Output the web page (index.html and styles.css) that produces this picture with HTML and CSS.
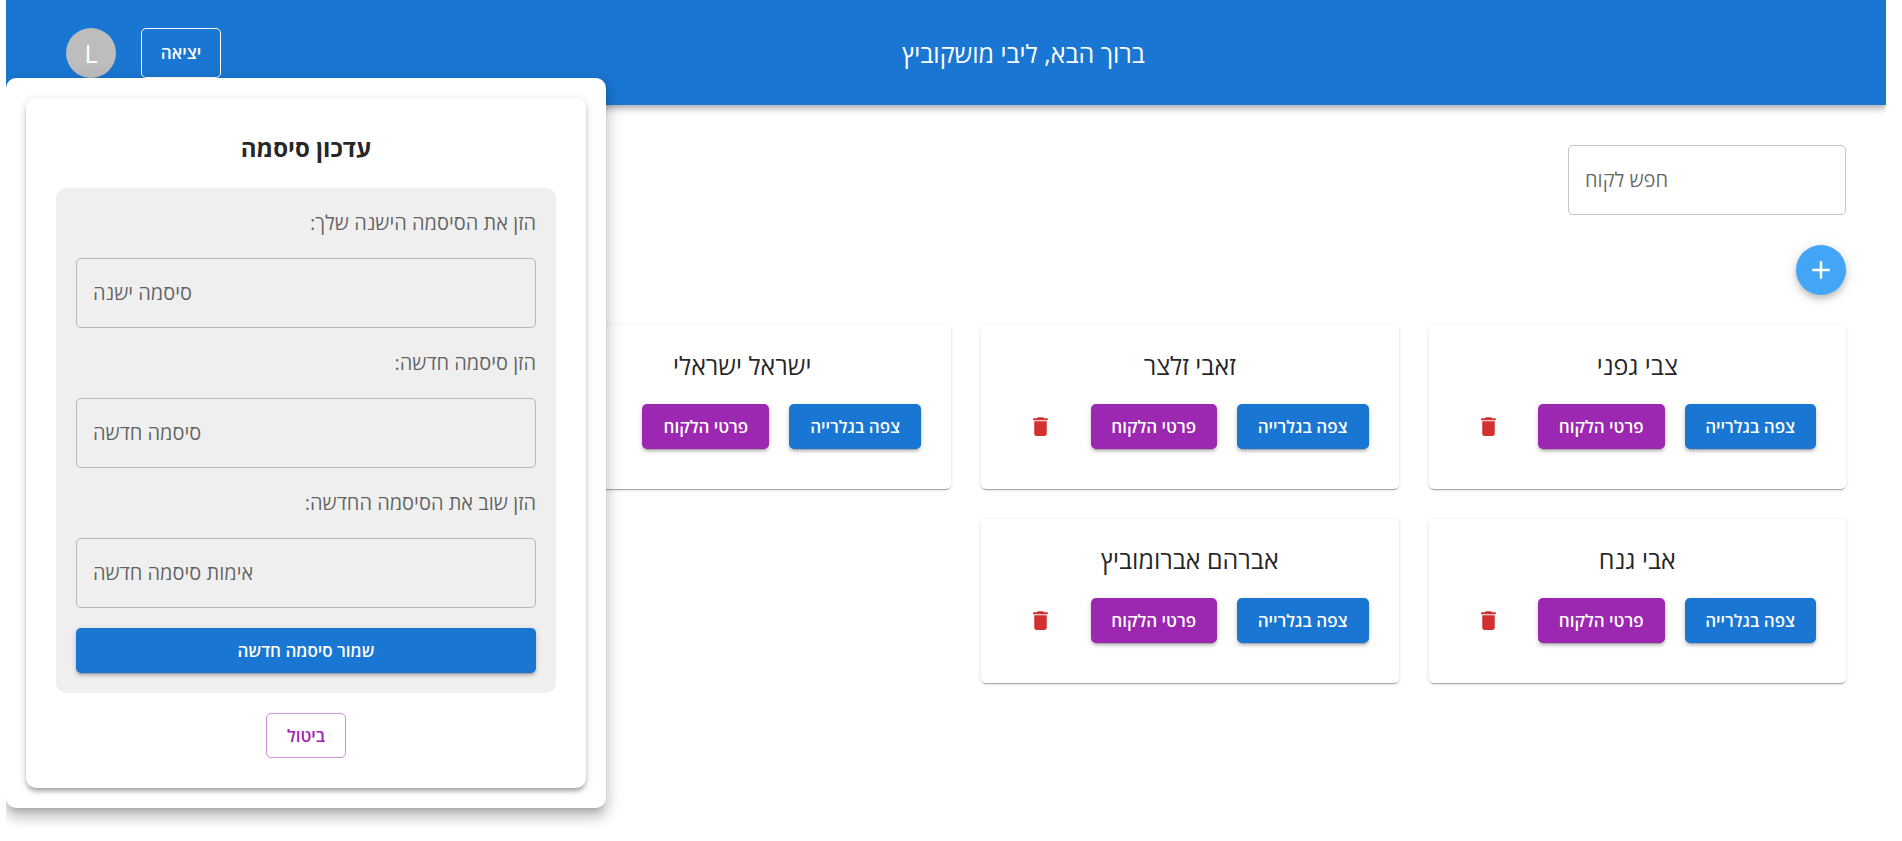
FILE: index.html
```html
<!DOCTYPE html>
<html lang="he" dir="rtl">
<head>
<meta charset="utf-8">
<meta name="viewport" content="width=device-width, initial-scale=1">
<title>ניהול לקוחות</title>
<link rel="stylesheet" href="styles.css">
</head>
<body>
<svg class="sprite" aria-hidden="true">
  <symbol id="icon-delete" viewBox="0 0 24 24"><path d="M6 19c0 1.100.9 2 2 2h8c1.100 0 2-.9 2-2V7H6zM19 4h-3.500l-1-1h-5l-1 1H5v2h14z"/></symbol>
  <symbol id="icon-add" viewBox="0 0 24 24"><path d="M19 13h-6v6h-2v-6H5v-2h6V5h2v6h6z"/></symbol>
</svg>

<header class="app-bar">
  <h1 class="app-bar__title">ברוך הבא, ליבי מושקוביץ</h1>
  <div class="app-bar__actions">
    <button type="button" class="btn btn--light">יציאה</button>
    <button type="button" class="avatar">L</button>
  </div>

  <section class="popover" aria-labelledby="password-title">
    <div class="panel">
      <h2 class="panel__title" id="password-title">עדכון סיסמה</h2>
      <form class="form">
        <label class="form__label" for="old-password">הזן את הסיסמה הישנה שלך:</label>
        <input class="field" id="old-password" type="password" placeholder="סיסמה ישנה">
        <label class="form__label" for="new-password">הזן סיסמה חדשה:</label>
        <input class="field" id="new-password" type="password" placeholder="סיסמה חדשה">
        <label class="form__label" for="confirm-password">הזן שוב את הסיסמה החדשה:</label>
        <input class="field" id="confirm-password" type="password" placeholder="אימות סיסמה חדשה">
        <button type="submit" class="btn btn--primary">שמור סיסמה חדשה</button>
      </form>
      <button type="button" class="btn btn--outlined">ביטול</button>
    </div>
  </section>
</header>

<main class="content">
  <input class="field field--search" type="text" placeholder="חפש לקוח" aria-label="חפש לקוח">
  <button type="button" class="fab" aria-label="הוסף לקוח"><svg class="icon icon--large"><use href="#icon-add"/></svg></button>

  <div class="grid">
    <article class="card">
      <h2 class="card__name">צבי גפני</h2>
      <div class="card__actions">
        <button type="button" class="btn btn--primary">צפה בגלרייה</button>
        <button type="button" class="btn btn--secondary">פרטי הלקוח</button>
        <button type="button" class="icon-btn" aria-label="מחק"><svg class="icon"><use href="#icon-delete"/></svg></button>
      </div>
    </article>
    <article class="card">
      <h2 class="card__name">זאבי זלצר</h2>
      <div class="card__actions">
        <button type="button" class="btn btn--primary">צפה בגלרייה</button>
        <button type="button" class="btn btn--secondary">פרטי הלקוח</button>
        <button type="button" class="icon-btn" aria-label="מחק"><svg class="icon"><use href="#icon-delete"/></svg></button>
      </div>
    </article>
    <article class="card">
      <h2 class="card__name">ישראל ישראלי</h2>
      <div class="card__actions">
        <button type="button" class="btn btn--primary">צפה בגלרייה</button>
        <button type="button" class="btn btn--secondary">פרטי הלקוח</button>
      </div>
    </article>
    <article class="card card--new-row">
      <h2 class="card__name">אבי גנח</h2>
      <div class="card__actions">
        <button type="button" class="btn btn--primary">צפה בגלרייה</button>
        <button type="button" class="btn btn--secondary">פרטי הלקוח</button>
        <button type="button" class="icon-btn" aria-label="מחק"><svg class="icon"><use href="#icon-delete"/></svg></button>
      </div>
    </article>
    <article class="card">
      <h2 class="card__name">אברהם אברומוביץ</h2>
      <div class="card__actions">
        <button type="button" class="btn btn--primary">צפה בגלרייה</button>
        <button type="button" class="btn btn--secondary">פרטי הלקוח</button>
        <button type="button" class="icon-btn" aria-label="מחק"><svg class="icon"><use href="#icon-delete"/></svg></button>
      </div>
    </article>
  </div>
</main>
</body>
</html>
```

FILE: styles.css
```css
* {
  box-sizing: border-box;
}

body {
  min-height: 100vh;
  margin: 0 16px 0 6px;
  background: #fff;
  color: rgba(0, 0, 0, 0.87);
  font-family: "Open Sans", "Noto Sans", sans-serif;
  font-size: 20px;
  line-height: 30px;
}

h1,
h2 {
  margin: 0;
  font-size: 25px;
  line-height: 40px;
  font-weight: 400;
  text-align: center;
}

button,
input {
  font-family: inherit;
}

button {
  cursor: pointer;
}

.sprite {
  display: none;
}

.icon {
  display: block;
  width: 25px;
  height: 25px;
  fill: currentColor;
}

.icon--large {
  width: 30px;
  height: 30px;
}

/* Header */
.app-bar {
  position: relative;
  z-index: 1;
  display: flex;
  align-items: center;
  min-height: 105px;
  padding: 0 60px;
  background: #1976d2;
  color: #fff;
  box-shadow: 0 2px 5px -1px rgba(0, 0, 0, 0.2), 0 5px 6px rgba(0, 0, 0, 0.14), 0 1px 12px rgba(0, 0, 0, 0.12);
}

.app-bar__title {
  flex: 1;
}

.app-bar__actions {
  display: flex;
  gap: 25px;
}

.avatar {
  width: 50px;
  height: 50px;
  padding: 0;
  border: 0;
  border-radius: 50%;
  background: #bdbdbd;
  color: #fff;
  font-size: 25px;
  line-height: 50px;
}

/* Buttons */
.btn {
  min-width: 80px;
  min-height: 45px;
  padding: 0 21px;
  border: 0;
  border-radius: 5px;
  color: #fff;
  font-size: 17px;
  font-weight: 600;
  line-height: 30px;
  white-space: nowrap;
}

.btn--primary,
.btn--secondary {
  box-shadow: 0 4px 1px -3px rgba(0, 0, 0, 0.2), 0 3px 3px rgba(0, 0, 0, 0.14), 0 1px 6px rgba(0, 0, 0, 0.12);
}

.btn--primary {
  background: #1976d2;
}

.btn--secondary {
  background: #9c27b0;
}

.btn--light,
.btn--outlined {
  padding: 0 18px;
  border: 1px solid #fff;
  background: transparent;
}

.btn--outlined {
  align-self: center;
  border-color: rgba(156, 39, 176, 0.5);
  color: #9c27b0;
}

.icon-btn {
  display: grid;
  place-items: center;
  width: 60px;
  height: 45px;
  padding: 0;
  border: 0;
  background: transparent;
  color: #d32f2f;
}

.fab {
  display: grid;
  place-items: center;
  width: 50px;
  height: 50px;
  padding: 0;
  border: 0;
  border-radius: 50%;
  background: #42a5f5;
  color: #fff;
  box-shadow: 0 4px 6px -1px rgba(0, 0, 0, 0.16), 0 4px 10px rgba(0, 0, 0, 0.1), 0 1px 16px rgba(0, 0, 0, 0.08);
}

/* Text fields */
.field {
  width: 100%;
  height: 70px;
  padding: 0 16px 2px;
  border: 1px solid rgba(0, 0, 0, 0.23);
  border-radius: 5px;
  background: transparent;
  color: inherit;
  font-size: 20px;
  text-align: left;
}

.field::placeholder {
  color: rgba(0, 0, 0, 0.6);
  opacity: 1;
}

.field--search {
  width: 278px;
}

/* Password popover */
.popover {
  position: absolute;
  top: 78px;
  left: 0;
  width: 600px;
  max-width: 100%;
  padding: 20px;
  border-radius: 10px;
  background: #fff;
  color: rgba(0, 0, 0, 0.87);
  box-shadow: 0 6px 6px -4px rgba(0, 0, 0, 0.2), 0 10px 12px 1px rgba(0, 0, 0, 0.14), 0 4px 18px 2px rgba(0, 0, 0, 0.12);
}

.panel {
  display: flex;
  flex-direction: column;
  gap: 20px;
  padding: 30px;
  border-radius: 10px;
  box-shadow: 0 4px 4px -2px rgba(0, 0, 0, 0.2), 0 4px 5px rgba(0, 0, 0, 0.14), 0 1px 10px rgba(0, 0, 0, 0.12);
}

.panel__title {
  font-size: 24px;
  font-weight: 700;
}

.form {
  display: flex;
  flex-direction: column;
  gap: 20px;
  padding: 20px;
  border-radius: 10px;
  background: #efefef;
}

.form__label {
  color: rgba(0, 0, 0, 0.6);
}

/* Customer list */
.content {
  display: flex;
  flex-direction: column;
  align-items: flex-start;
  gap: 30px;
  padding: 40px 40px 40px 80px;
}

.grid {
  display: grid;
  grid-template-columns: repeat(4, minmax(0, 1fr));
  gap: 30px;
  width: 100%;
}

.card {
  display: flex;
  flex-direction: column;
  gap: 19px;
  padding: 20px 30px 40px;
  border-radius: 5px;
  background: #fff;
  box-shadow: 0 3px 1px -2px rgba(0, 0, 0, 0.2), 0 1px 1px rgba(0, 0, 0, 0.14), 0 1px 4px rgba(0, 0, 0, 0.12);
}

.card--new-row {
  grid-column-start: 1;
}

.card__actions {
  display: flex;
  gap: 20px;
}
```
